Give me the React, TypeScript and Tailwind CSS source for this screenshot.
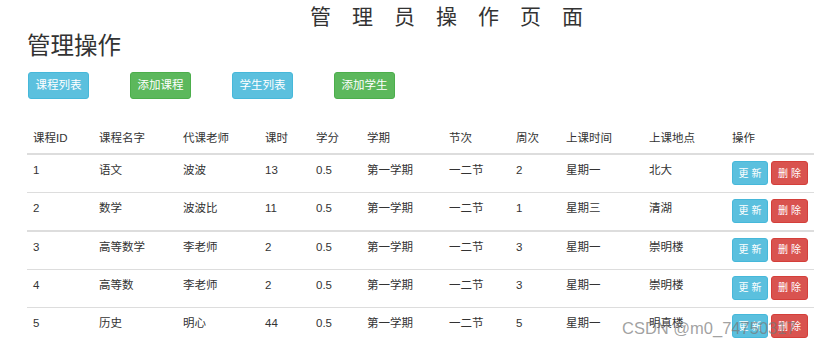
import React from "react";

const cols = [66, 84, 82, 51, 51, 82, 67, 50, 83, 83, 88];
const headers = ["课程ID", "课程名字", "代课老师", "课时", "学分", "学期", "节次", "周次", "上课时间", "上课地点", "操作"];
const rows = [
  ["1", "语文", "波波", "13", "0.5", "第一学期", "一二节", "2", "星期一", "北大"],
  ["2", "数学", "波波比", "11", "0.5", "第一学期", "一二节", "1", "星期三", "清湖"],
  ["3", "高等数学", "李老师", "2", "0.5", "第一学期", "一二节", "3", "星期一", "崇明楼"],
  ["4", "高等数", "李老师", "2", "0.5", "第一学期", "一二节", "3", "星期一", "崇明楼"],
  ["5", "历史", "明心", "44", "0.5", "第一学期", "一二节", "5", "星期一", "明真楼"],
];

const font = { fontFamily: '"Liberation Sans", "Noto Sans CJK SC", sans-serif' };

export default function App() {
  return (
    <div className="relative w-[814px] h-[346px] overflow-hidden bg-white text-[#333]" style={font}>
      <div className="pl-[310px] pt-[2px] h-[30px] text-[21px] leading-[30px] tracking-[21px] text-[#333] whitespace-nowrap">
        管理员操作页面
      </div>
      <div className="pl-[27px] h-[34px] text-[23.5px] leading-[32px] text-[#333]">管理操作</div>
      <div className="flex gap-[41px] pl-[28px] mt-[8px]">
        <button className="w-[61px] h-[27px] rounded-[3px] bg-[#5bc0de] border border-[#46b8da] text-white text-[11.5px]">课程列表</button>
        <button className="w-[61px] h-[27px] rounded-[3px] bg-[#5cb85c] border border-[#4cae4c] text-white text-[11.5px]">添加课程</button>
        <button className="w-[61px] h-[27px] rounded-[3px] bg-[#5bc0de] border border-[#46b8da] text-white text-[11.5px]">学生列表</button>
        <button className="w-[61px] h-[27px] rounded-[3px] bg-[#5cb85c] border border-[#4cae4c] text-white text-[11.5px]">添加学生</button>
      </div>
      <div className="pl-[27px] mt-[24px]">
        <table className="border-collapse table-fixed w-[787px] text-[11.5px] text-[#333]">
          <colgroup>
            {cols.map((w, i) => (
              <col key={i} style={{ width: w }} />
            ))}
          </colgroup>
          <thead>
            <tr className="h-[31px] border-b-2 border-[#ddd]">
              {headers.map((h) => (
                <th key={h} className="text-left font-normal pl-[6px] align-bottom pb-[6px] leading-[17px]">
                  {h}
                </th>
              ))}
            </tr>
          </thead>
          <tbody>
            {rows.map((r, ri) => (
              <tr key={ri} className={ri === 2 ? "border-t-2 border-[#ddd]" : ri === 0 ? "" : "border-t border-[#ddd]"}>
                {r.map((c, ci) => (
                  <td key={ci} className="pl-[6px] pt-[7px] pb-[6px] align-top leading-[17px] h-[38.4px]">
                    {c}
                  </td>
                ))}
                <td className="pl-[6px] pt-[6px] pb-[6px] align-top">
                  <div className="flex gap-[3px]">
                    <button className="w-[36px] h-[24px] rounded-[3px] bg-[#5bc0de] border border-[#46b8da] text-white text-[10px] tracking-[3px] pl-[3px]">更新</button>
                    <button className="w-[37px] h-[24px] rounded-[3px] bg-[#d9534f] border border-[#d43f3a] text-white text-[10px] tracking-[3px] pl-[3px]">删除</button>
                  </div>
                </td>
              </tr>
            ))}
          </tbody>
        </table>
      </div>
      <div className="absolute left-[622px] top-[317px] text-[16.5px] leading-[22px] text-[rgba(120,120,120,0.7)] whitespace-nowrap" style={{ fontFamily: '"Liberation Sans", sans-serif' }}>
        CSDN @m0_74750317
      </div>
    </div>
  );
}
